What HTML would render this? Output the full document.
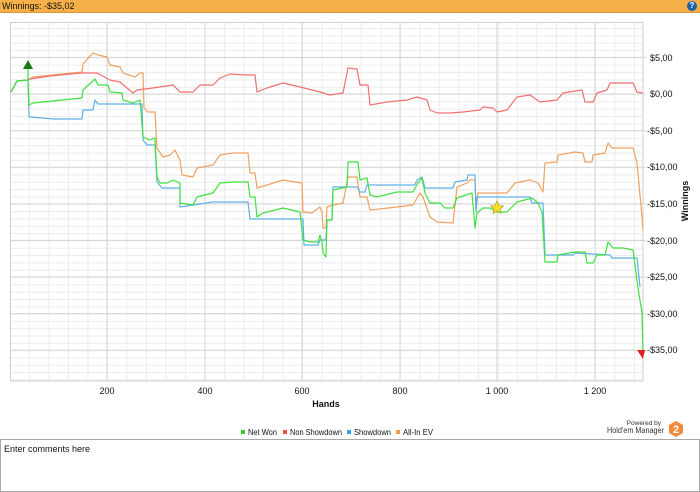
<!DOCTYPE html>
<html><head><meta charset="utf-8"><style>
html,body{margin:0;padding:0;width:700px;height:492px;overflow:hidden;background:#fff;font-family:"Liberation Sans",Tahoma,sans-serif;}
.hdr{position:absolute;left:0;top:0;width:700px;height:12px;background:#f5b04a;border-bottom:1px solid #d9963a;font-size:9px;line-height:12px;}
.hdr span{padding-left:2px;color:#111}
.help{position:absolute;right:3px;top:1px;width:10px;height:10px;border-radius:50%;background:#1d5fa8;color:#fff;font-size:8px;line-height:10px;text-align:center;font-weight:bold}
.cm{position:absolute;left:0;top:439px;width:698px;height:51px;border:1px solid #a8a8a8;font-size:9px;}
.cm span{position:absolute;left:3px;top:4px;color:#111}
</style></head><body>
<div class="hdr"><span>Winnings: -$35,02</span><div class="help">?</div></div>
<svg width="700" height="492" style="position:absolute;left:0;top:0" xmlns="http://www.w3.org/2000/svg">
<defs>
<pattern id="hv" x="9.4" y="0" width="19.52" height="10" patternUnits="userSpaceOnUse"><line x1="0.5" y1="0" x2="0.5" y2="10" stroke="#ececec" stroke-width="1"/></pattern>
<pattern id="hh" x="0" y="94" width="10" height="7.32" patternUnits="userSpaceOnUse"><line x1="0" y1="0.5" x2="10" y2="0.5" stroke="#ececec" stroke-width="1"/></pattern>
</defs>
<rect x="10" y="22" width="633" height="359" fill="url(#hv)"/>
<rect x="10" y="22" width="633" height="359" fill="url(#hh)"/>
<g stroke="#d6d6d6" stroke-width="1">
<line x1="107" y1="22" x2="107" y2="381"/><line x1="205" y1="22" x2="205" y2="381"/><line x1="302" y1="22" x2="302" y2="381"/><line x1="400" y1="22" x2="400" y2="381"/><line x1="497" y1="22" x2="497" y2="381"/><line x1="595" y1="22" x2="595" y2="381"/>
<line x1="10" y1="57.4" x2="646" y2="57.4"/><line x1="10" y1="94" x2="646" y2="94"/><line x1="10" y1="130.6" x2="646" y2="130.6"/><line x1="10" y1="167.2" x2="646" y2="167.2"/><line x1="10" y1="203.8" x2="646" y2="203.8"/><line x1="10" y1="240.4" x2="646" y2="240.4"/><line x1="10" y1="277" x2="646" y2="277"/><line x1="10" y1="313.6" x2="646" y2="313.6"/><line x1="10" y1="350.2" x2="646" y2="350.2"/>
</g>
<rect x="10.5" y="22.5" width="632.5" height="358.5" fill="none" stroke="#cfcfcf"/>
<g fill="none" stroke-width="1.2" stroke-linejoin="round">
<polyline stroke="#f0a060" points="11,92 17,81 28,80 33,77 82,72 83,64 93,53 98,55 107,57 110,65 120,67 123,73 135,77 140,73 143,73 144,108 148,112 155,112 157,148 163,157 170,155 175,150 180,160 182,175 193,177 197,168 213,165 220,155 233,153 248,153 250,173 255,173 257,188 267,185 283,180 302,183 303,212 312,213 320,207 322,212 323,228 326,228 327,207 333,205 343,203 348,177 357,177 360,197 367,197 370,210 397,207 413,205 420,193 423,197 430,217 437,222 453,223 457,187 467,183 470,180 475,180 476,210 478,193 487,193 507,193 515,183 530,180 538,183 543,192 545,163 557,162 558,155 575,152 583,153 585,162 592,162 593,155 605,153 608,143 612,148 633,148 637,163 642,217 643,230"/>
<polyline stroke="#f07070" points="11,92 17,81 28,80 30,79 50,76 80,73 97,73 110,80 120,82 127,88 133,93 137,90 153,88 173,85 180,92 193,92 200,85 213,85 220,78 230,74 247,75 255,75 257,92 267,88 283,83 300,87 320,92 330,95 343,93 348,68 357,69 360,85 368,85 370,105 387,102 407,100 417,97 427,100 430,110 437,113 450,113 463,112 480,110 483,107 493,108 497,112 507,110 517,97 530,95 540,102 557,100 563,93 582,90 585,102 593,102 597,93 607,90 610,83 633,83 637,92 643,93"/>
<polyline stroke="#60b0e8" points="11,92 17,81 28,80 29,117 55,119 82,119 83,110 93,110 95,100 98,104 142,104 143,140 147,145 155,145 157,182 162,188 180,188 180,207 213,202 248,202 250,219 303,219 304,245 318,245 320,240 326,240 327,220 332,220 333,187 357,187 360,192 365,192 367,185 415,185 417,180 422,177 425,188 453,188 455,182 467,180 468,175 475,175 476,212 477,197 530,197 532,203 543,203 545,255 573,255 575,253 610,255 612,258 637,258 640,287"/>
<polyline stroke="#40e040" points="11,92 17,81 28,80 29,105 33,103 82,98 83,90 95,79 98,85 108,85 110,92 122,93 123,100 133,103 140,100 143,137 150,140 155,138 157,177 160,183 167,183 173,180 180,183 180,203 193,205 197,197 213,193 220,183 233,182 248,182 250,197 255,197 257,217 263,213 283,208 300,212 303,240 310,242 318,242 320,235 322,242 323,253 326,257 327,220 332,220 333,190 347,187 348,162 358,162 360,180 367,178 370,195 377,197 397,192 413,192 418,183 422,178 425,193 430,203 440,203 445,208 453,208 457,198 472,193 475,228 477,213 483,208 490,208 497,212 507,212 517,202 532,198 538,203 542,212 545,262 557,262 558,255 575,252 585,252 587,263 593,263 597,255 605,255 608,242 613,248 623,248 633,250 638,288 642,313 643,353"/>
<line x1="28" y1="68" x2="28" y2="80" stroke="#40e040"/>
</g>
<polygon points="28,60 23,69 33,69" fill="#1a7a1a"/>
<polygon points="637,350 645,350 643,359" fill="#e02020"/>
<polygon points="497,201 499,205.5 503.5,206 500,209 501,213.5 497,211 493,213.5 494,209 490.5,206 495,205.5" fill="#f8e020" stroke="#a09020" stroke-width="0.6"/>
<g font-size="9" fill="#111" font-family="Liberation Sans,sans-serif">
<text x="650" y="61">$5,00</text><text x="650" y="97">$0,00</text><text x="647" y="134">-$5,00</text><text x="647" y="170">-$10,00</text><text x="647" y="207">-$15,00</text><text x="647" y="244">-$20,00</text><text x="647" y="280">-$25,00</text><text x="647" y="317">-$30,00</text><text x="647" y="353">-$35,00</text>
<text x="107" y="394" text-anchor="middle">200</text><text x="205" y="394" text-anchor="middle">400</text><text x="302" y="394" text-anchor="middle">600</text><text x="400" y="394" text-anchor="middle">800</text><text x="497" y="394" text-anchor="middle">1 000</text><text x="595" y="394" text-anchor="middle">1 200</text>
<text x="326" y="407" text-anchor="middle" font-weight="bold">Hands</text>
<text transform="translate(688,201) rotate(-90)" text-anchor="middle" font-weight="bold">Winnings</text>
<rect x="241" y="430" width="4" height="4" fill="#30d030"/><text x="248" y="435" font-size="8.5" textLength="29" lengthAdjust="spacingAndGlyphs">Net Won</text>
<rect x="283" y="430" width="4" height="4" fill="#f05050"/><text x="290" y="435" font-size="8.5" textLength="52" lengthAdjust="spacingAndGlyphs">Non Showdown</text>
<rect x="347" y="430" width="4" height="4" fill="#30a0f0"/><text x="354" y="435" font-size="8.5" textLength="37" lengthAdjust="spacingAndGlyphs">Showdown</text>
<rect x="396" y="430" width="4" height="4" fill="#f0a040"/><text x="403" y="435" font-size="8.5" textLength="30" lengthAdjust="spacingAndGlyphs">All-In EV</text>
<text x="661" y="425" font-size="6.5" text-anchor="end" fill="#333">Powered by</text>
<text x="664" y="433" font-size="8.5" text-anchor="end" fill="#333" textLength="57" lengthAdjust="spacingAndGlyphs">Hold'em Manager</text>
</g>
<polygon points="676,421 683,425 683,433 676,437 669,433 669,425" fill="#f08a3a"/>
<text x="676" y="433" font-size="11" font-weight="bold" fill="#fff" text-anchor="middle" font-family="Liberation Sans,sans-serif">2</text>
</svg>
<div class="cm"><span>Enter comments here</span></div>
</body></html>
